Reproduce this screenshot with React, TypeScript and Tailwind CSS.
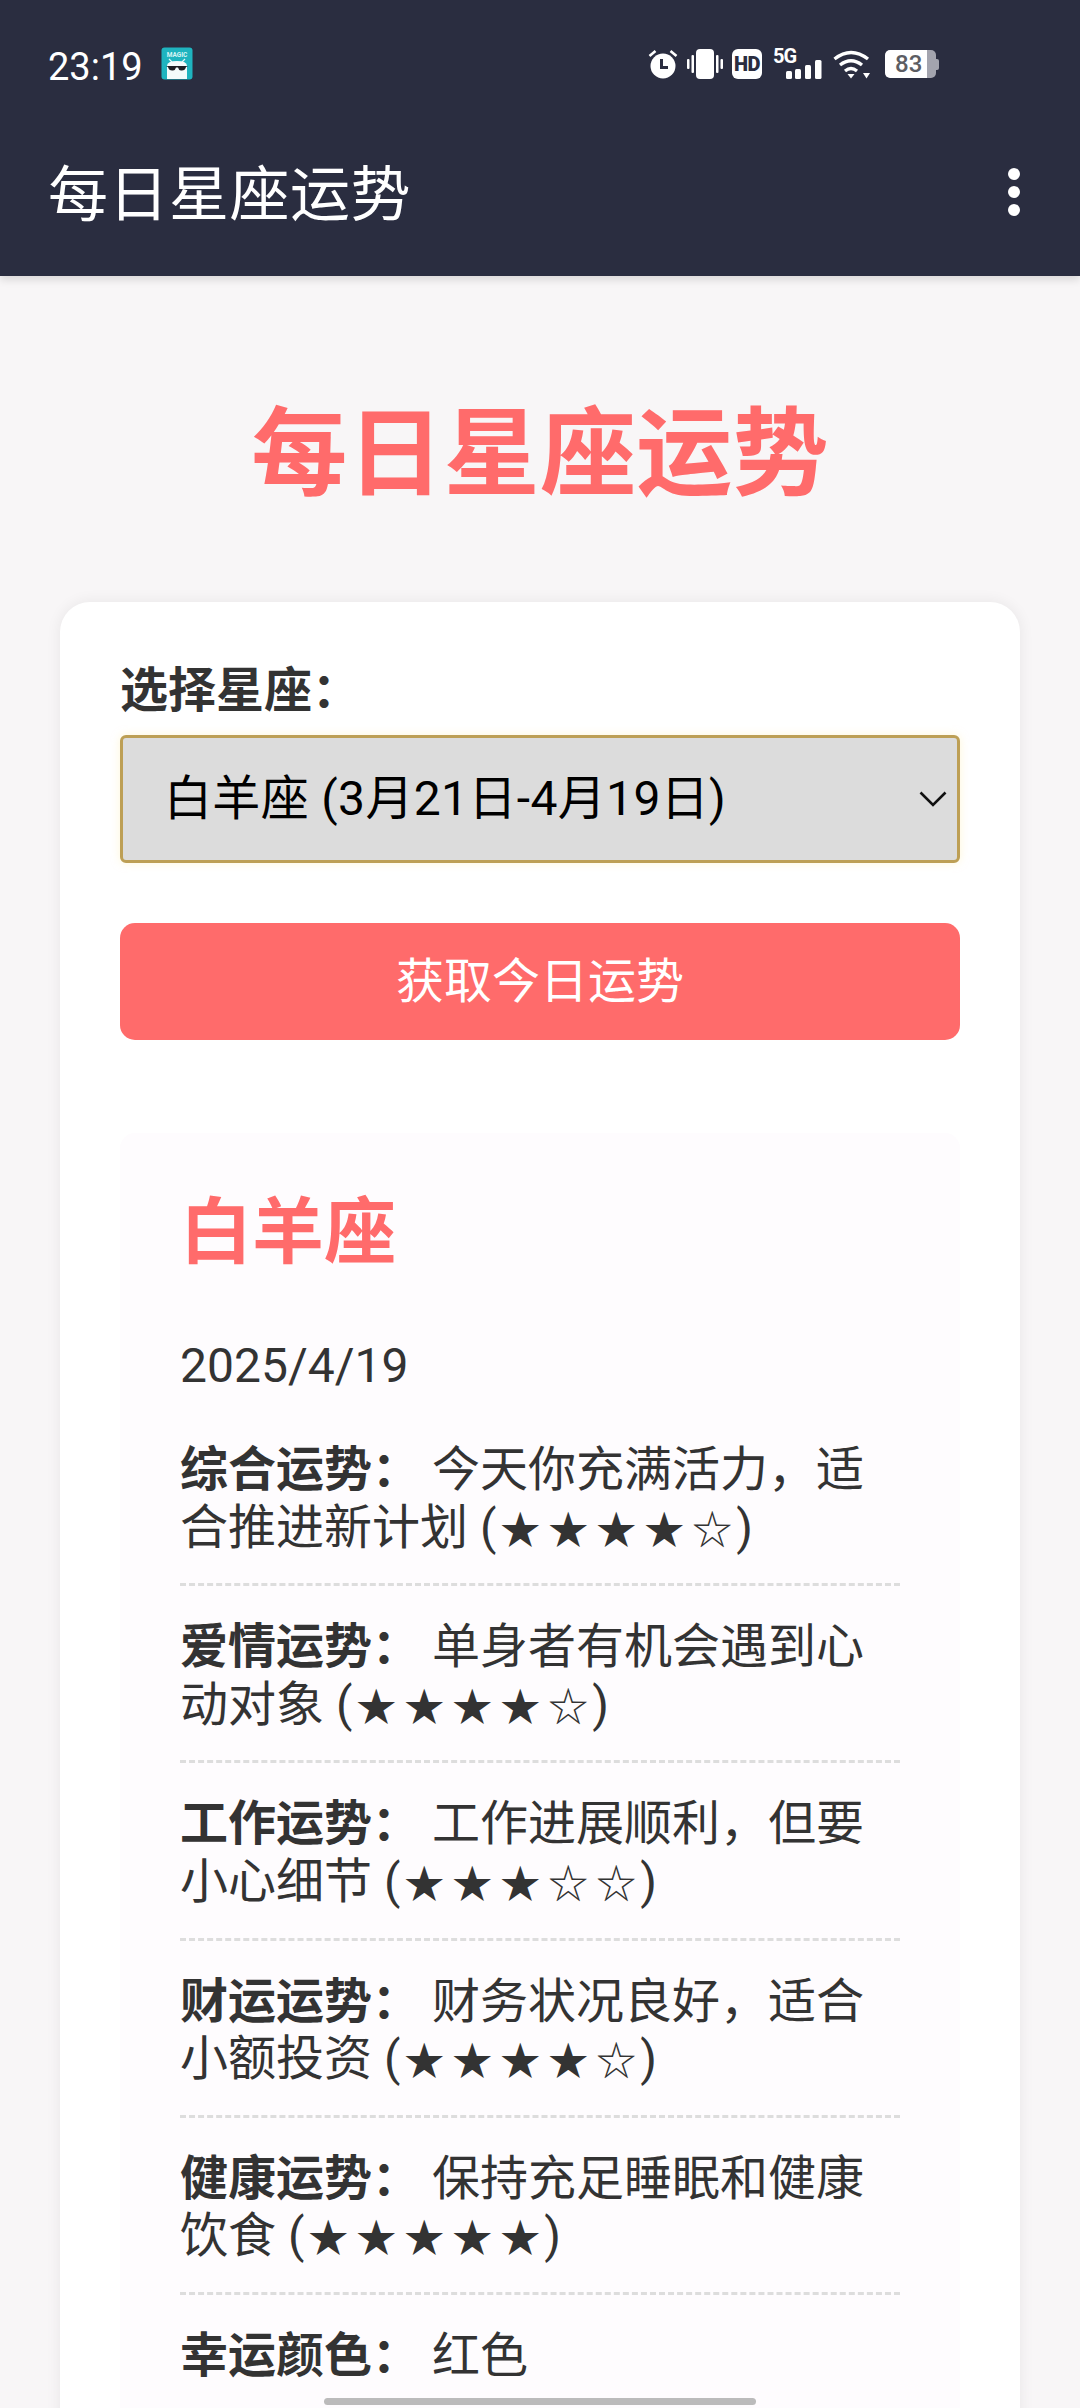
import React from "react";

const rows: [string, string, string][] = [
  ["综合运势：", "今天你充满活力，适合推进新计划", "★★★★☆"],
  ["爱情运势：", "单身者有机会遇到心动对象", "★★★★☆"],
  ["工作运势：", "工作进展顺利，但要小心细节", "★★★☆☆"],
  ["财运运势：", "财务状况良好，适合小额投资", "★★★★☆"],
  ["健康运势：", "保持充足睡眠和健康饮食", "★★★★★"],
  ["幸运颜色：", "红色", ""],
];

function AppIcon() {
  return (
    <svg width="32" height="33" viewBox="0 0 32 33" className="mb-[2px] ml-[18px]">
      <rect x="0.5" y="0.5" width="31" height="32" rx="3" fill="#1fb4bf" />
      <text x="16" y="10" textAnchor="middle" fontSize="6.5" fontWeight="700" fill="#d8f5f5" fontFamily="Roboto, sans-serif">MAGIC</text>
      <path d="M6 32 V19 Q6 14 16 14 Q26 14 26 19 V32 Z" fill="#f4fbfb" />
      <path d="M8 12 L11 15 M24 12 L21 15" stroke="#e8f8f8" strokeWidth="1.2" />
      <path d="M5 19 H27 L25 20 Q24 24 20 23.5 Q17.5 23 17 20.5 H15 Q14.5 23 12 23.5 Q8 24 7 20 Z" fill="#1d1f24" />
    </svg>
  );
}

function Alarm() {
  return (
    <svg width="30" height="30" viewBox="0 0 30 30">
      <circle cx="15" cy="17" r="12.5" fill="#fff" />
      <path d="M1.5 7 L7.5 2 M28.5 7 L22.5 2" stroke="#fff" strokeWidth="2.6" />
      <path d="M13.5 10 V18.5 H20" stroke="#2a2d40" strokeWidth="3" fill="none" />
    </svg>
  );
}

function Vibrate() {
  return (
    <svg width="36" height="30" viewBox="0 0 36 30">
      <rect x="9" y="0" width="18" height="30" rx="4" fill="#fff" />
      <rect x="0" y="10" width="2.5" height="10" rx="1" fill="#fff" />
      <rect x="4.5" y="6" width="2.5" height="18" rx="1" fill="#fff" />
      <rect x="29" y="6" width="2.5" height="18" rx="1" fill="#fff" />
      <rect x="33.5" y="10" width="2.5" height="10" rx="1" fill="#fff" />
    </svg>
  );
}

function Signal() {
  return (
    <div className="relative h-[30px] w-[49px]">
      <span className="absolute left-0 top-[-3px] font-[Roboto,sans-serif] text-[20px] font-bold leading-[20px] tracking-[-1px] text-white">5G</span>
      <svg width="49" height="30" viewBox="0 0 49 30" className="absolute left-0 top-0">
        <rect x="13" y="22" width="6" height="8" rx="1.5" fill="#fff" />
        <rect x="22" y="20" width="6" height="10" rx="1.5" fill="#fff" />
        <rect x="32" y="16" width="6" height="14" rx="1.5" fill="#fff" />
        <rect x="42" y="11" width="6.5" height="19" rx="1.5" fill="#fff" />
      </svg>
    </div>
  );
}

function Wifi() {
  return (
    <svg width="38" height="29" viewBox="0 0 38 29" fill="none">
      <path d="M1.5 9 Q18 -4 35 9" stroke="#fff" strokeWidth="3.4" />
      <path d="M7 15 Q18 6.5 29 15" stroke="#fff" strokeWidth="3.4" />
      <path d="M12 21 Q18 16 24 21" stroke="#fff" strokeWidth="3.2" />
      <path d="M14.5 24 L21.5 24 L18 28.5 Z" fill="#fff" />
      <path d="M30 23 L37 23 L33.5 28.5 Z" fill="#fff" />
    </svg>
  );
}

function Battery() {
  return (
    <div className="flex h-[28px] items-center">
      <div className="relative flex h-[28px] w-[51px] items-center overflow-hidden rounded-[5px] bg-[#a3a4ae]">
        <div className="h-full w-[42px] rounded-l-[5px] bg-white" />
        <span className="absolute left-[10px] font-[Roboto,sans-serif] text-[24px] font-medium leading-[28px] text-[#5c5d63]">83</span>
      </div>
      <div className="h-[11px] w-[3px] rounded-r-[2px] bg-[#a3a4ae]" />
    </div>
  );
}

export default function App() {
  return (
    <div className="relative h-[2408px] w-[1080px] overflow-hidden bg-[#f8f6f7] font-[Roboto,'Noto_Sans_CJK_SC',sans-serif] text-[#333]">
      <header className="relative z-10 h-[276px] bg-[#2a2d40] shadow-[0_4px_8px_rgba(0,0,0,0.12)]">
        <div className="flex h-[96px] items-center pl-[48px] pr-[141px] pt-[32px]">
          <span className="mt-[5px] text-[38px] leading-[36px] text-white">23:19</span>
          <AppIcon />
          <div className="ml-auto flex items-center">
            <Alarm />
            <div className="ml-[9px]"><Vibrate /></div>
            <div className="ml-[9px] flex h-[30px] w-[30px] items-center justify-center rounded-[6px] bg-white font-[Roboto,sans-serif] text-[20px] font-black leading-none tracking-[-0.5px] text-[#2a2d40]">HD</div>
            <div className="ml-[11px]"><Signal /></div>
            <div className="ml-[11px]"><Wifi /></div>
            <div className="ml-[14px]"><Battery /></div>
          </div>
        </div>
        <div className="flex h-[180px] items-center justify-between pl-[48px] pr-[60px] pt-[19px]">
          <h2 className="text-[60px] font-normal leading-none tracking-[0.5px] text-white">每日星座运势</h2>
          <div className="mb-[8px] flex flex-col gap-[6px]">
            <span className="h-[12px] w-[12px] rounded-full bg-white" />
            <span className="h-[12px] w-[12px] rounded-full bg-white" />
            <span className="h-[12px] w-[12px] rounded-full bg-white" />
          </div>
        </div>
      </header>

      <main className="px-[60px]">
        <h1 className="pt-[121px] text-center text-[96px] font-bold leading-[115px] tracking-[0.25px] text-[#ff6b6b]">每日星座运势</h1>
        <section className="mt-[90px] rounded-[30px] bg-white p-[60px] shadow-[0_0_15px_rgba(0,0,0,0.07)]">
          <label className="block text-[48px] font-bold leading-[58px] text-[#333]">选择星座：</label>
          <div className="relative mt-[15px]">
            <select className="block h-[128px] w-full appearance-none rounded-[6px] border-[3px] border-[#bd9f55] bg-[#dcdcdc] pl-[41px] text-[48px] leading-[58px] tracking-[0.35px] text-black shadow-[0_0_8px_rgba(255,240,180,0.5)]">
              <option>白羊座 (3月21日-4月19日)</option>
            </select>
            <svg width="28" height="16" viewBox="0 0 28 16" fill="none" className="absolute right-[13px] top-[56px]">
              <path d="M1.5 1.5 L14 14 L26.5 1.5" stroke="#111" strokeWidth="2.6" />
            </svg>
          </div>
          <button className="mt-[60px] block h-[117px] w-full rounded-[15px] bg-[#ff6b6b] text-[48px] text-white">获取今日运势</button>
          <div className="mt-[93px] rounded-[15px] bg-[#fefcfe] p-[60px]">
            <h3 className="text-[72px] font-bold leading-[80px] text-[#ff6b6b]">白羊座</h3>
            <p className="mt-[64px] text-[48px] leading-[58px] text-[#333]">2025/4/19</p>
            <div className="mt-[14px]">
              {rows.map(([k, v, stars], i) => (
                <div
                  key={k}
                  className={
                    "pb-[27px] pt-[32px] text-[48px] leading-[57.6px] text-[#333] " +
                    (i < rows.length - 1 ? "border-b-[3px] border-dashed border-[#dddddd]" : "")
                  }
                >
                  <strong className="font-bold">{k}</strong> {v}
                  {stars && (
                    <>
                      {" ("}
                      <span className="ml-[4px] mr-[-4px] text-[40px] leading-[0] tracking-[8px]">{stars}</span>
                      {")"}
                    </>
                  )}
                </div>
              ))}
            </div>
          </div>
        </section>
      </main>

      <div className="absolute bottom-[3px] left-[324px] h-[7px] w-[432px] rounded-full bg-[#bbbbbb]" />
    </div>
  );
}
